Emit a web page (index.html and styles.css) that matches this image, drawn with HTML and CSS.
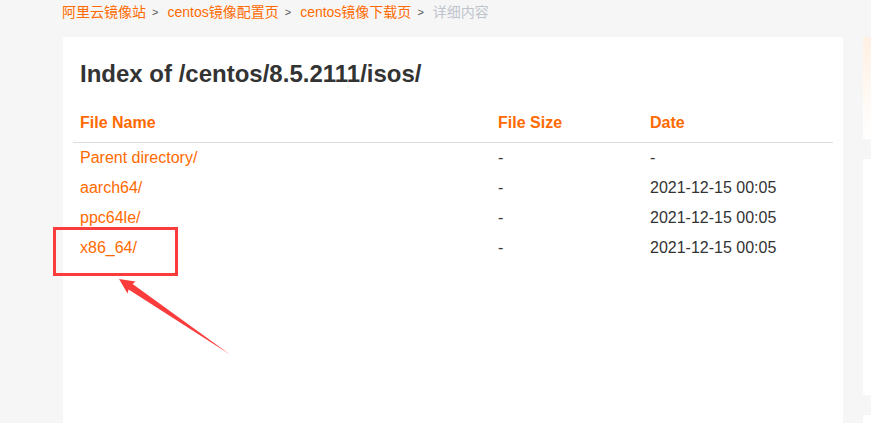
FILE: index.html
```html
<!DOCTYPE html>
<html lang="zh-CN">
<head>
<meta charset="utf-8">
<title>Index of /centos/8.5.2111/isos/</title>
<link rel="stylesheet" href="styles.css">
</head>
<body>
<div class="page">
  <nav class="breadcrumb">
    <a class="crumb" href="#">阿里云镜像站</a><span class="sep">&gt;</span>
    <a class="crumb" href="#">centos镜像配置页</a><span class="sep">&gt;</span>
    <a class="crumb" href="#">centos镜像下载页</a><span class="sep">&gt;</span>
    <span class="crumb current">详细内容</span>
  </nav>
  <div class="main">
    <section class="card">
      <h1 class="title">Index of /centos/8.5.2111/isos/</h1>
      <table class="listing">
        <thead>
          <tr><th class="c-name">File Name</th><th class="c-size">File Size</th><th class="c-date">Date</th></tr>
        </thead>
        <tbody>
          <tr><td><a href="#">Parent directory/</a></td><td>-</td><td>-</td></tr>
          <tr><td><a href="#">aarch64/</a></td><td>-</td><td>2021-12-15 00:05</td></tr>
          <tr><td><a href="#">ppc64le/</a></td><td>-</td><td>2021-12-15 00:05</td></tr>
          <tr><td><a href="#">x86_64/</a></td><td>-</td><td>2021-12-15 00:05</td></tr>
        </tbody>
      </table>
    </section>
    <aside class="side">
      <div class="promo"></div>
      <div class="side-card"></div>
      <div class="side-card last"></div>
    </aside>
  </div>
</div>
<div class="mark-box"></div>
<svg class="mark-arrow" width="871" height="423" viewBox="0 0 871 423">
  <polygon points="119,279 135.5,281.5 132.6,284 230,354.5 128.6,289.5 127.5,293.5" fill="#fa3c3c"/>
</svg>
</body>
</html>
```
FILE: styles.css
```css
html, body {
  margin: 0;
  padding: 0;
}
body {
  background: #f6f6f6;
  font-family: Arial, "Liberation Sans", "Noto Sans CJK SC", sans-serif;
  color: #333;
  width: 871px;
  height: 423px;
  overflow: hidden;
  position: relative;
}
a { text-decoration: none; color: #ff6a00; }

.page {
  display: flex;
  flex-direction: column;
  height: 423px;
}
.breadcrumb {
  padding: 3px 0 0 62px;
  height: 18px;
  font-size: 14px;
  line-height: 16px;
  display: flex;
  align-items: center;
  white-space: nowrap;
}
.crumb { color: #ff6a00; }
.crumb.current { color: #c0c4cc; }
.sep {
  font-size: 11px;
  color: #555;
  margin: 0 9px 0 6px;
}

.main {
  margin-top: 16px;
  display: flex;
  gap: 20px;
  padding-left: 63px;
  flex: 1;
  min-height: 0;
}
.card {
  flex: 0 0 780px;
  background: #fff;
  box-sizing: border-box;
  padding: 23px 10px 0 10px;
}
.title {
  margin: 0 0 15px 7px;
  font-size: 24px;
  line-height: 28px;
  font-weight: bold;
  color: #333;
}
.listing {
  width: 760px;
  border-collapse: collapse;
  font-size: 16px;
  line-height: 20px;
}
.listing th {
  text-align: left;
  color: #ff6a00;
  font-weight: bold;
  padding: 10px 7px 9px;
  border-bottom: 1px solid #ddd;
}
.c-name { width: 404px; }
.c-size { width: 138px; }
.listing td {
  padding: 5px 7px;
  color: #333;
}
.side {
  flex: 0 0 8px;
  display: flex;
  flex-direction: column;
  gap: 20px;
  min-height: 0;
}
.promo {
  height: 102px;
  background: linear-gradient(180deg, #fff0e3 0%, #fff8f2 50%, #ffffff 100%);
}
.side-card {
  height: 236px;
  background: #fff;
}
.side-card.last {
  height: auto;
  flex: 1;
}

.mark-box {
  position: absolute;
  left: 53px;
  top: 227px;
  width: 119px;
  height: 43px;
  border: 3px solid #fa3c3c;
}
.mark-arrow {
  position: absolute;
  left: 0;
  top: 0;
  pointer-events: none;
}
```
